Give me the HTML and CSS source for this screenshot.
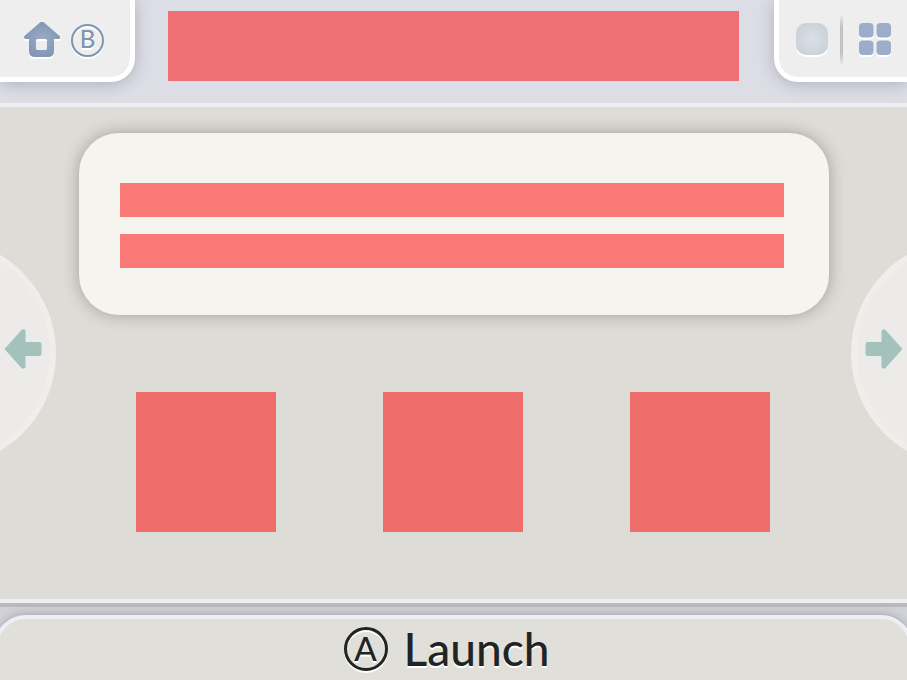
FILE: index.html
```html
<!DOCTYPE html>
<html lang="en">
<head>
<meta charset="utf-8">
<title>Launcher</title>
<link rel="stylesheet" href="styles.css">
</head>
<body>
<header class="top">
  <button class="corner corner-left" aria-label="Home, B">
    <svg class="home" width="38" height="38" viewBox="0 0 38 38" aria-hidden="true">
      <defs>
        <radialGradient id="blue"><stop offset="0" stop-color="#9bacca"/><stop offset="1" stop-color="#8296b1"/></radialGradient>
      </defs>
      <path fill="url(#blue)" fill-rule="evenodd" d="M17 .5Q19 -1 21 .5L36.500 14Q38 16 36 17H31V29Q31 35 25 35H12Q6 35 6 29V17H2.500Q0 16 1.500 14ZM14.500 17Q13 17 13 18.500V26.500Q13 28 14.500 28H22.500Q24 28 24 26.500V18.500Q24 17 22.500 17Z"/>
    </svg>
    <span class="key key-b">B</span>
  </button>
  <div class="title"></div>
  <div class="corner corner-right">
    <button class="view" aria-label="Single view">
      <svg width="32" height="34" viewBox="0 0 32 34" aria-hidden="true">
        <defs><radialGradient id="pale"><stop offset="0" stop-color="#dae0ea"/><stop offset="1" stop-color="#cdd3d8"/></radialGradient></defs>
        <rect width="32" height="32" rx="10" fill="url(#pale)"/>
      </svg>
    </button>
    <span class="divider"></span>
    <button class="view" aria-label="Grid view">
      <svg width="32" height="34" viewBox="0 0 32 34" fill="#9badcb" aria-hidden="true">
        <rect width="14.500" height="14.500" rx="4"/><rect x="17.500" width="14.500" height="14.500" rx="4"/>
        <rect y="17.500" width="14.500" height="14.500" rx="4"/><rect x="17.500" y="17.500" width="14.500" height="14.500" rx="4"/>
      </svg>
    </button>
  </div>
</header>
<main class="stage">
  <div class="side side-left">
    <button class="round" aria-label="Previous">
      <svg width="38" height="42" viewBox="0 0 38 42"><path d="M.5 21 17.500 2Q20.500 0 21.500 3V14H35Q37.500 14 37.500 16.500V25.500Q37.500 28 35 28H21.500V39Q20.500 42 17.500 40Z"/></svg>
    </button>
  </div>
  <div class="content">
    <section class="card">
      <div class="line"></div>
      <div class="line"></div>
    </section>
    <div class="tiles">
      <div class="tile"></div>
      <div class="tile"></div>
      <div class="tile"></div>
    </div>
  </div>
  <div class="side side-right">
    <button class="round" aria-label="Next">
      <svg width="38" height="42" viewBox="0 0 38 42"><path d="M37.500 21 20.500 2Q17.500 0 16.500 3V14H3Q.5 14 .5 16.500V25.500Q.5 28 3 28H16.500V39Q17.500 42 20.500 40Z"/></svg>
    </button>
  </div>
</main>
<footer class="bottom">
  <button class="launch"><span class="key key-a">A</span><span>Launch</span></button>
</footer>
</body>
</html>
```
FILE: styles.css
```css
* { box-sizing: border-box; }
body {
  margin: 0;
  min-height: 100vh;
  display: flex;
  flex-direction: column;
  overflow: hidden;
  background: #dddde6;
  font-family: Lato, "Noto Sans", sans-serif;
}
button {
  margin: 0;
  padding: 0;
  border: 0;
  background: none;
  font: inherit;
  color: inherit;
  cursor: pointer;
}
svg { display: block; }

.top {
  display: grid;
  grid-template-columns: 135px 1fr 133px;
  align-items: start;
  height: 103px;
}
.corner {
  display: flex;
  align-items: center;
  height: 82px;
  background: #eeeeee;
  border: 0 solid #ffffff;
  border-bottom-width: 5px;
  box-shadow: 0 2px 16px rgba(70, 70, 90, 0.3);
}
.corner-left {
  gap: 10px;
  padding: 4px 0 0 23px;
  border-right-width: 5px;
  border-bottom-right-radius: 24px;
}
.corner-right {
  gap: 12px;
  padding: 3px 0 0 17px;
  border-left-width: 5px;
  border-bottom-left-radius: 24px;
}
.home, .view svg { filter: drop-shadow(0 2px 0 #ffffff); }
.title {
  height: 70px;
  margin: 11px 35px 0 33px;
  background: #f06f72;
}
.divider {
  width: 3px;
  height: 52px;
  margin-right: 4px;
  background: linear-gradient(transparent, #c2c2c2 25%, #c2c2c2 75%, transparent);
}
.key {
  display: flex;
  align-items: center;
  justify-content: center;
  padding-bottom: 3px;
  border-style: solid;
  border-radius: 50%;
}
.key-b {
  width: 33px;
  height: 33px;
  border-width: 2px;
  color: #8095ae;
  font-size: 24px;
  font-weight: 500;
  line-height: 28px;
  box-shadow: 0 2px 0 #ffffff, inset 0 2px 0 #ffffff;
  text-shadow: 0 2px 0 #ffffff;
}

.stage {
  flex: 1;
  display: grid;
  grid-template-columns: 56px 1fr 56px;
  background: #dedcd7;
  border: solid #eeeef3;
  border-width: 4px 0;
}
.side {
  display: flex;
  align-items: center;
  overflow: hidden;
}
.side-left { justify-content: flex-end; }
.round {
  flex: none;
  display: flex;
  align-items: center;
  width: 228px;
  height: 228px;
  padding: 0 8px 8px;
  border: 6px solid #efeeeb;
  border-radius: 50%;
  background: #ecebea;
  fill: #a2c2bb;
}
.side-left .round { justify-content: flex-end; }
.content { padding: 26px 22px 0 23px; }
.card {
  display: grid;
  gap: 17px;
  padding: 50px 45px 47px 41px;
  border-radius: 40px;
  background: #f5f4ef;
  box-shadow: 0 0 16px rgba(70, 65, 55, 0.4);
}
.line {
  height: 34px;
  background: #fb7a77;
}
.tiles {
  display: flex;
  justify-content: space-between;
  padding: 77px 59px 0 57px;
}
.tile {
  width: 140px;
  height: 140px;
  background: #ef6d6b;
}

.bottom {
  height: 77px;
  padding-top: 12px;
  overflow: hidden;
  background: linear-gradient(#b9b9bf 4px, #d0d0d7 4px, #d6d6de 20px);
}
.bottom .launch {
  display: flex;
  align-items: center;
  justify-content: center;
  gap: 16px;
  width: calc(100% + 12px);
  height: 85px;
  margin: 0 -6px;
  padding: 0 14px 17px 0;
  border: 4px solid #eeeef3;
  border-radius: 32px 32px 0 0;
  background: #e1dfda;
  box-shadow: 0 0 10px rgba(70, 70, 80, 0.4);
  color: #222423;
  font-size: 46px;
  font-weight: 500;
  line-height: 50px;
  text-shadow: 0 2px 0 #ffffff;
}
.key-a {
  width: 44px;
  height: 44px;
  border-width: 3px;
  font-size: 33px;
  line-height: 38px;
  box-shadow: 0 2px 0 #ffffff, inset 0 2px 0 #ffffff;
}
```
